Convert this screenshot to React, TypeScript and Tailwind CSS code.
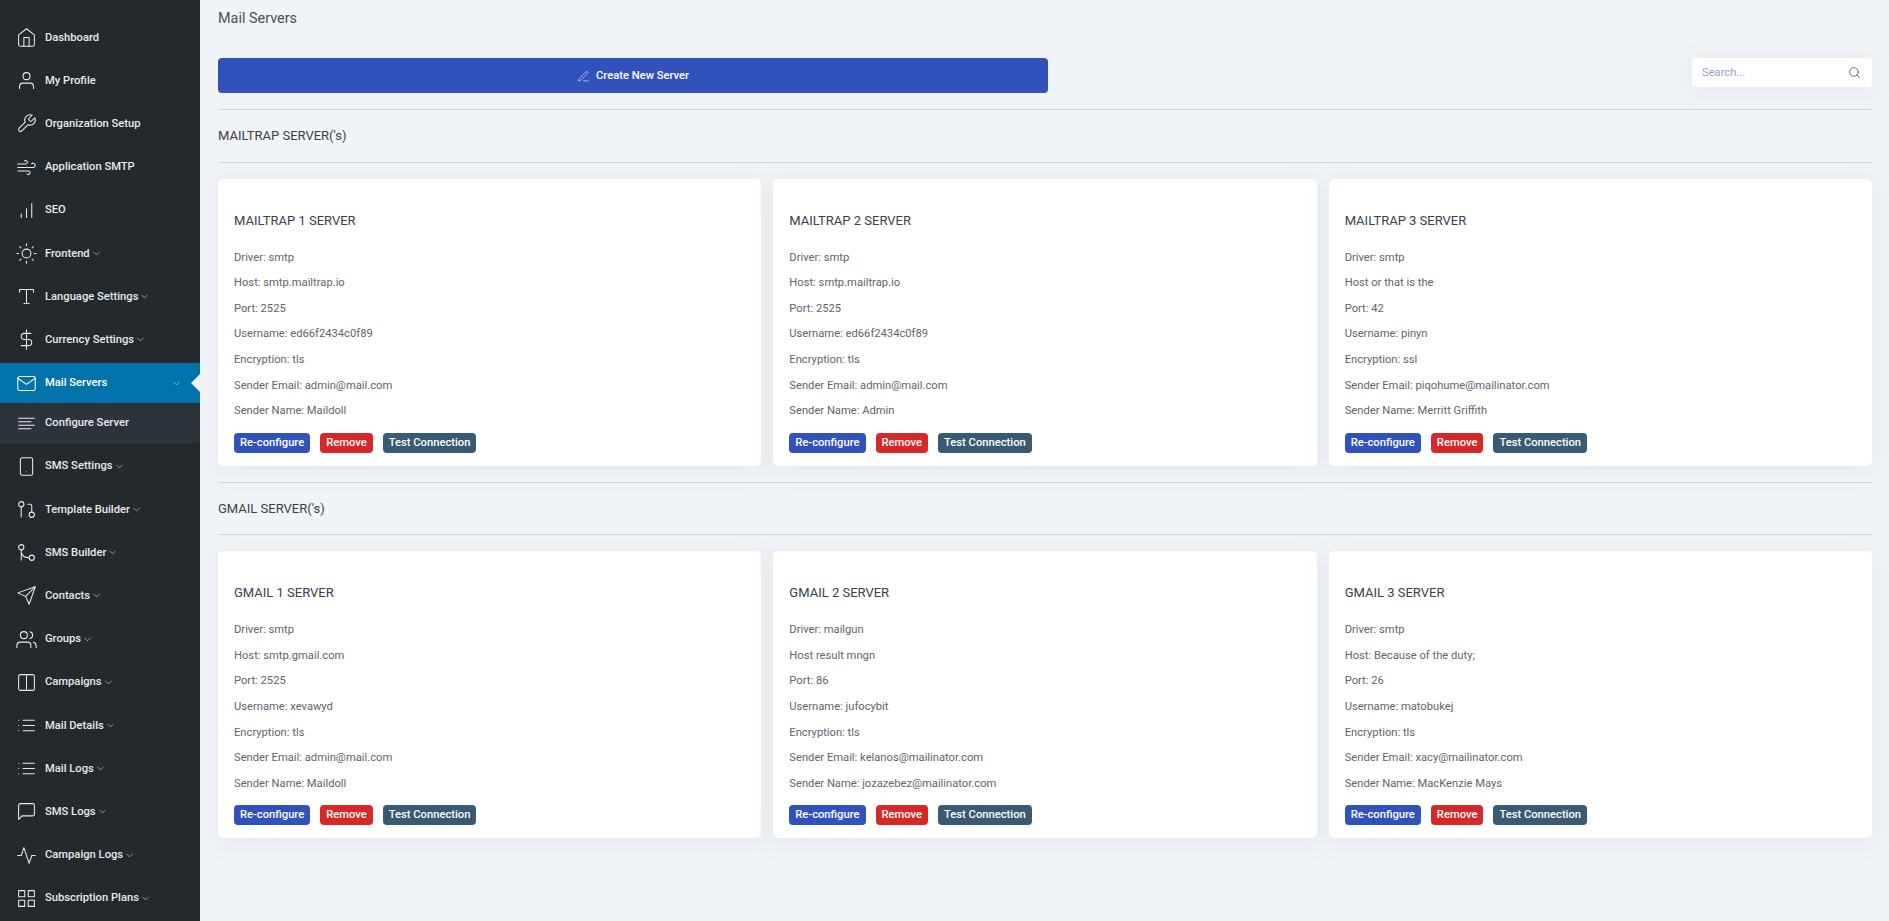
import type { ReactNode } from "react";
import {
  FiActivity,
  FiAlignLeft,
  FiBarChart,
  FiChevronDown,
  FiDollarSign,
  FiEdit3,
  FiGrid,
  FiHome,
  FiList,
  FiMail,
  FiMessageSquare,
  FiSearch,
  FiSend,
  FiSmartphone,
  FiSun,
  FiTool,
  FiType,
  FiUser,
  FiUsers,
  FiWind,
} from "react-icons/fi";

const font = { fontFamily: "Roboto, sans-serif" };

function TemplateIcon() {
  return (
    <svg viewBox="0 0 24 24" className="h-[21px] w-[21px]" fill="none" stroke="currentColor" strokeWidth="1.2">
      <circle cx="6" cy="6" r="3" />
      <path d="M6 9v12" />
      <circle cx="18" cy="18" r="3" />
      <path d="M13 6h3a2 2 0 0 1 2 2v7" />
    </svg>
  );
}

function RouteIcon() {
  return (
    <svg viewBox="0 0 24 24" className="h-[21px] w-[21px]" fill="none" stroke="currentColor" strokeWidth="1.2">
      <circle cx="6" cy="6" r="3" />
      <circle cx="18" cy="18" r="3" />
      <path d="M6 9v12M6 12c1 4 5 6 9 6" />
    </svg>
  );
}

function ColumnsIcon() {
  return (
    <svg viewBox="0 0 24 24" className="h-[21px] w-[21px]" fill="none" stroke="currentColor" strokeWidth="1.2">
      <rect x="3" y="3" width="18" height="18" rx="2" />
      <path d="M12 3v18" />
    </svg>
  );
}

const ic = "h-[21px] w-[21px]";
const icon = (Icon: typeof FiHome) => <Icon className={ic} strokeWidth={1.2} />;

type NavItem = { label: string; icon: ReactNode; caret?: boolean };

const topNav: NavItem[] = [
  { label: "Dashboard", icon: icon(FiHome) },
  { label: "My Profile", icon: icon(FiUser) },
  { label: "Organization Setup", icon: icon(FiTool) },
  { label: "Application SMTP", icon: icon(FiWind) },
  { label: "SEO", icon: icon(FiBarChart) },
  { label: "Frontend", icon: icon(FiSun), caret: true },
  { label: "Language Settings", icon: icon(FiType), caret: true },
  { label: "Currency Settings", icon: icon(FiDollarSign), caret: true },
];

const bottomNav: NavItem[] = [
  { label: "SMS Settings", icon: icon(FiSmartphone), caret: true },
  { label: "Template Builder", icon: <TemplateIcon />, caret: true },
  { label: "SMS Builder", icon: <RouteIcon />, caret: true },
  { label: "Contacts", icon: icon(FiSend), caret: true },
  { label: "Groups", icon: icon(FiUsers), caret: true },
  { label: "Campaigns", icon: <ColumnsIcon />, caret: true },
  { label: "Mail Details", icon: icon(FiList), caret: true },
  { label: "Mail Logs", icon: icon(FiList), caret: true },
  { label: "SMS Logs", icon: icon(FiMessageSquare), caret: true },
  { label: "Campaign Logs", icon: icon(FiActivity), caret: true },
  { label: "Subscription Plans", icon: icon(FiGrid), caret: true },
];

type Server = {
  name: string;
  driver: string;
  host: string;
  port: string;
  username: string;
  encryption: string;
  email: string;
  sender: string;
};

const mailtrap: Server[] = [
  { name: "MAILTRAP 1 SERVER", driver: "smtp", host: "Host: smtp.mailtrap.io", port: "2525", username: "ed66f2434c0f89", encryption: "tls", email: "admin@mail.com", sender: "Maildoll" },
  { name: "MAILTRAP 2 SERVER", driver: "smtp", host: "Host: smtp.mailtrap.io", port: "2525", username: "ed66f2434c0f89", encryption: "tls", email: "admin@mail.com", sender: "Admin" },
  { name: "MAILTRAP 3 SERVER", driver: "smtp", host: "Host or that is the", port: "42", username: "pinyn", encryption: "ssl", email: "piqohume@mailinator.com", sender: "Merritt Griffith" },
];

const gmail: Server[] = [
  { name: "GMAIL 1 SERVER", driver: "smtp", host: "Host: smtp.gmail.com", port: "2525", username: "xevawyd", encryption: "tls", email: "admin@mail.com", sender: "Maildoll" },
  { name: "GMAIL 2 SERVER", driver: "mailgun", host: "Host result mngn", port: "86", username: "jufocybit", encryption: "tls", email: "kelanos@mailinator.com", sender: "jozazebez@mailinator.com" },
  { name: "GMAIL 3 SERVER", driver: "smtp", host: "Host: Because of the duty;", port: "26", username: "matobukej", encryption: "tls", email: "xacy@mailinator.com", sender: "MacKenzie Mays" },
];

function NavRow({ item }: { item: NavItem }) {
  return (
    <a className="flex h-[43.2px] items-center pl-[16px] text-[#e8eaec]">
      <span className="flex w-[29px] shrink-0 items-center">{item.icon}</span>
      <span className="pt-[1px] text-[11.2px] font-medium">{item.label}</span>
      {item.caret && <FiChevronDown className="ml-[1px] h-[11px] w-[11px]" strokeWidth={1.2} />}
    </a>
  );
}

function Sidebar() {
  return (
    <aside className="h-[921px] w-[200px] shrink-0 overflow-hidden bg-[#24292d]">
      <div className="pt-[16px]">
        {topNav.map((item) => (
          <NavRow key={item.label} item={item} />
        ))}
        <a className="relative mt-[1.5px] flex h-[40px] items-center bg-[#0073aa] pl-[16px] text-white">
          <span className="flex w-[29px] shrink-0 items-center">{icon(FiMail)}</span>
          <span className="pt-[1px] text-[11.2px] font-medium">Mail Servers</span>
          <FiChevronDown className="absolute right-[18px] h-[11px] w-[11px]" strokeWidth={1.2} />
          <span className="absolute right-0 h-0 w-0 border-y-[9px] border-r-[9px] border-y-transparent border-r-[#f1f4f7]" />
        </a>
        <a className="flex h-[40px] items-center bg-[#2d333b] pl-[16px] text-[#e8eaec]">
          <span className="flex w-[29px] shrink-0 items-center">{icon(FiAlignLeft)}</span>
          <span className="pt-[1px] text-[11.2px] font-medium">Configure Server</span>
        </a>
        <div className="pt-[1.8px]">
          {bottomNav.map((item) => (
            <NavRow key={item.label} item={item} />
          ))}
        </div>
      </div>
    </aside>
  );
}

function ServerCard({ server }: { server: Server }) {
  const rows = [
    `Driver: ${server.driver}`,
    server.host,
    `Port: ${server.port}`,
    `Username: ${server.username}`,
    `Encryption: ${server.encryption}`,
    `Sender Email: ${server.email}`,
    `Sender Name: ${server.sender}`,
  ];
  return (
    <div className="h-[287px] rounded-[5px] bg-white px-[16px] pt-[33px] shadow-[0_4px_25px_rgba(120,130,150,0.1)]">
      <h4 className="text-[13px] leading-[18px] text-[#3a4048]">{server.name}</h4>
      <div className="mt-[15px]">
        {rows.map((row) => (
          <p key={row} className="h-[25.67px] text-[11.2px] leading-[25.67px] text-[#5f646c]">
            {row}
          </p>
        ))}
      </div>
      <div className="mt-[8.5px] flex gap-[10px] text-[11.2px] font-medium text-white">
        <button className="h-[20px] rounded-[4px] bg-[#3152bb] px-[6px] pt-[1px]">Re-configure</button>
        <button className="h-[20px] rounded-[4px] bg-[#d62828] px-[6px] pt-[1px]">Remove</button>
        <button className="h-[20px] rounded-[4px] bg-[#385a72] px-[6px] pt-[1px]">Test Connection</button>
      </div>
    </div>
  );
}

function Section({ title, servers }: { title: string; servers: Server[] }) {
  return (
    <section>
      <hr className="border-[#d3d7dc]" />
      <h3 className="flex h-[51.5px] items-center text-[13px] text-[#3a4048]">{title}</h3>
      <hr className="border-[#d3d7dc]" />
      <div className="mt-[16px] grid grid-cols-3 gap-[12px]">
        {servers.map((server) => (
          <ServerCard key={server.name} server={server} />
        ))}
      </div>
    </section>
  );
}

export default function App() {
  return (
    <div className="flex h-[921px] overflow-hidden bg-[#f1f4f7]" style={font}>
      <Sidebar />
      <main className="min-w-0 flex-1 pl-[18px] pr-[17px]">
        <h1 className="flex h-[37px] items-center text-[14.4px] text-[#4a4f5c]">Mail Servers</h1>
        <div className="mt-[21px] flex items-start justify-between">
          <button className="flex h-[35px] w-[830px] items-center justify-center gap-[6px] rounded-[4px] bg-[#3152bb] pt-[1px] text-[11.2px] font-medium text-white">
            <FiEdit3 className="h-[13px] w-[13px]" strokeWidth={1} />
            Create New Server
          </button>
          <div className="flex h-[29px] w-[180px] items-center justify-between rounded-[4px] bg-white pl-[10px] pr-[11px] shadow-[0_4px_25px_rgba(120,130,150,0.1)]">
            <span className="pt-[1px] text-[11.2px] text-[#8ea4bd]">Search...</span>
            <FiSearch className="h-[13px] w-[13px] text-[#4a4f5c]" strokeWidth={1.5} />
          </div>
        </div>
        <div className="mt-[16px]">
          <Section title="MAILTRAP SERVER('s)" servers={mailtrap} />
        </div>
        <div className="mt-[16px]">
          <Section title="GMAIL SERVER('s)" servers={gmail} />
        </div>
      </main>
    </div>
  );
}
